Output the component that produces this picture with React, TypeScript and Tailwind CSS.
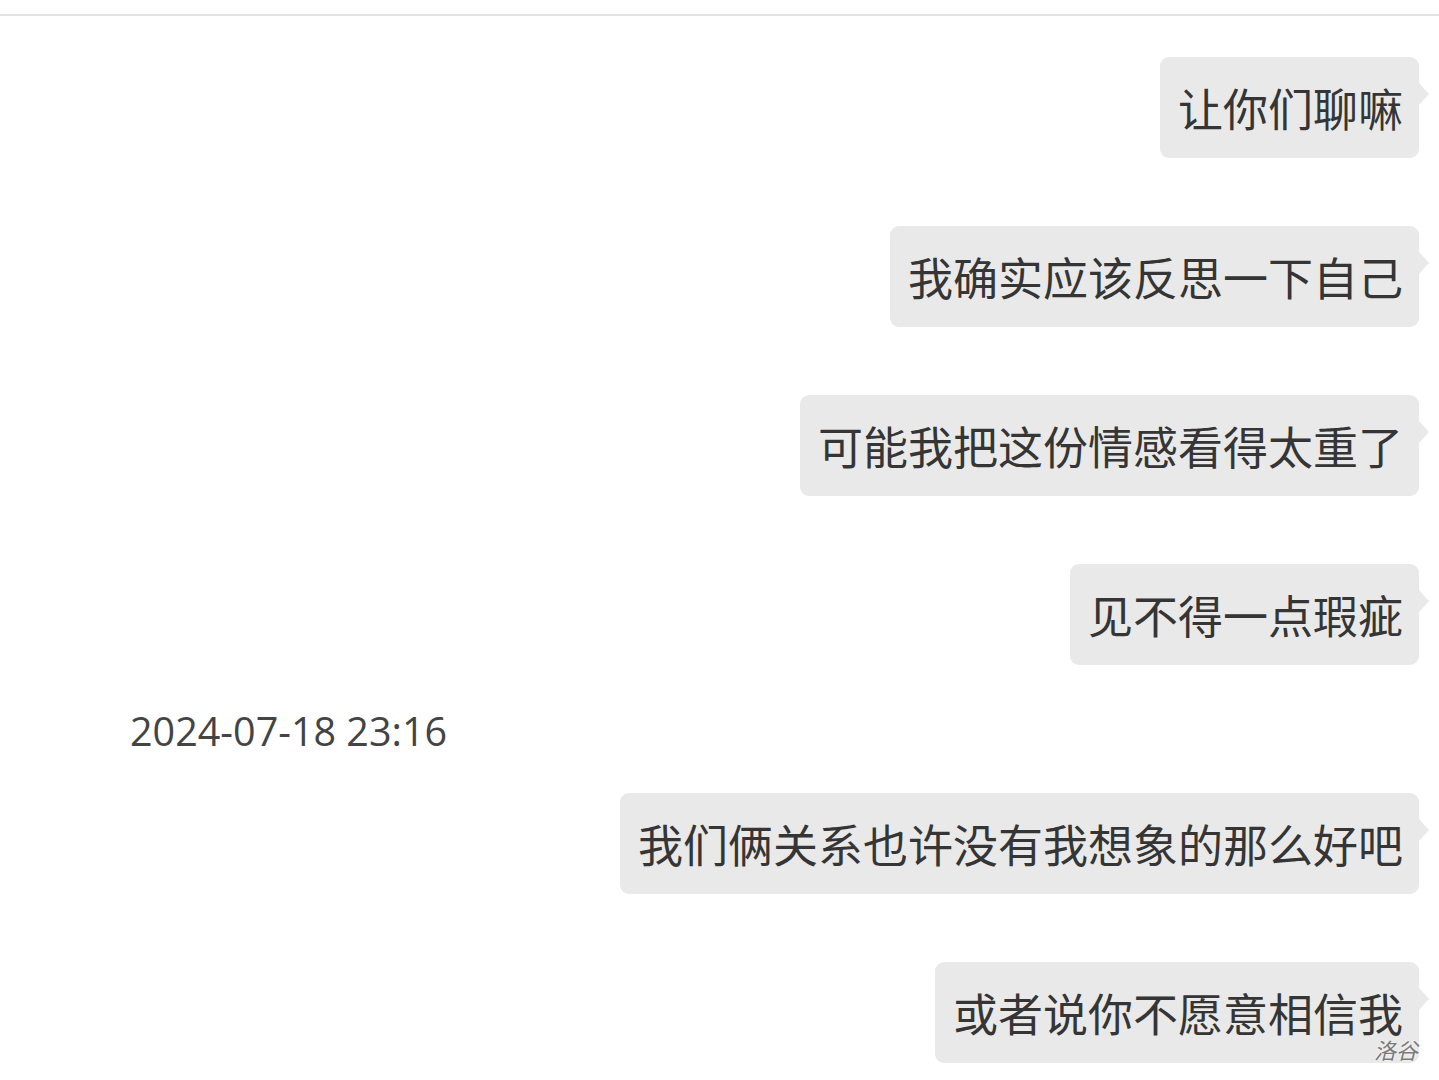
const messages = [
  '让你们聊嘛',
  '我确实应该反思一下自己',
  '可能我把这份情感看得太重了',
  '见不得一点瑕疵',
]

const later = ['我们俩关系也许没有我想象的那么好吧', '或者说你不愿意相信我']

function Bubble({ text, children }: { text: string; children?: React.ReactNode }) {
  return (
    <div className="relative flex h-[101px] items-center rounded-[9px] bg-[#e9e9e9] pl-[18px] pr-[16px]">
      <span className="whitespace-nowrap text-[45px] leading-none text-[#353535]">{text}</span>
      <span className="absolute right-[-10px] top-[26px] h-0 w-0 border-y-[11px] border-l-[10px] border-y-transparent border-l-[#e9e9e9]" />
      {children}
    </div>
  )
}

export default function App() {
  return (
    <div
      className="min-h-[1080px] w-full overflow-hidden bg-white"
      style={{ fontFamily: '"Noto Sans CJK SC", "Noto Sans", sans-serif' }}
    >
      <div className="mt-[14px] h-[2px] w-full bg-[#e3e3e3]" />
      <div className="flex flex-col items-end gap-[68px] pr-[20px] pt-[41px]">
        {messages.map((m) => (
          <Bubble key={m} text={m} />
        ))}
      </div>
      <div className="mt-[42px] pl-[130px] font-['Open_Sans',sans-serif] text-[39.5px] leading-[48px] text-[#444]">
        2024-07-18 23:16
      </div>
      <div className="mt-[38px] flex flex-col items-end gap-[68px] pr-[20px]">
        <Bubble text={later[0]} />
        <Bubble text={later[1]}>
          <span className="absolute bottom-[3px] right-[1px] text-[22px] italic leading-none text-[#7a7a7a] [text-shadow:0_0_2px_#fff]">
            洛谷
          </span>
        </Bubble>
      </div>
    </div>
  )
}
